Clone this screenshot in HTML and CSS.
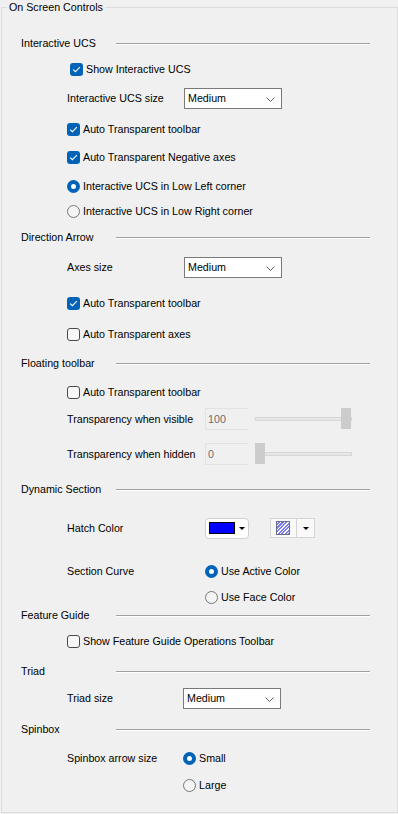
FILE: index.html
```html
<!DOCTYPE html>
<html lang="en">
<head>
    <meta charset="UTF-8">
    <meta name="viewport" content="width=device-width, initial-scale=1.0">
    <title>On Screen Controls</title>
    <link rel="stylesheet" href="styles.css">
</head>
<body>

<fieldset class="group">
    <legend>On Screen Controls</legend>

    <!-- Interactive UCS -->
    <div class="section-title gap-20"><span>Interactive UCS</span><i class="rule"></i></div>
    <div class="row gap-10 nudge">
        <span class="check on"><svg width="13" height="13" viewBox="0 0 13 13"><path d="M3.2 6.6 L5.4 8.7 L9.9 4.2" /></svg></span>Show Interactive UCS
    </div>
    <div class="row gap-13">
        <span class="field-label">Interactive UCS size</span>
        <div class="combo">Medium<svg class="chevron" width="9" height="5" viewBox="0 0 9 5"><path d="M0.5 0.5 L4.5 4.5 L8.5 0.5" /></svg></div>
    </div>
    <div class="row gap-15">
        <span class="check on"><svg width="13" height="13" viewBox="0 0 13 13"><path d="M3.2 6.6 L5.4 8.7 L9.9 4.2" /></svg></span>Auto Transparent toolbar
    </div>
    <div class="row gap-12">
        <span class="check on"><svg width="13" height="13" viewBox="0 0 13 13"><path d="M3.2 6.6 L5.4 8.7 L9.9 4.2" /></svg></span>Auto Transparent Negative axes
    </div>
    <div class="row gap-13">
        <span class="radio on"></span>Interactive UCS in Low Left corner
    </div>
    <div class="row gap-9">
        <span class="radio"></span>Interactive UCS in Low Right corner
    </div>

    <!-- Direction Arrow -->
    <div class="section-title gap-10"><span>Direction Arrow</span><i class="rule"></i></div>
    <div class="row gap-14">
        <span class="field-label">Axes size</span>
        <div class="combo">Medium<svg class="chevron" width="9" height="5" viewBox="0 0 9 5"><path d="M0.5 0.5 L4.5 4.5 L8.5 0.5" /></svg></div>
    </div>
    <div class="row gap-20">
        <span class="check on"><svg width="13" height="13" viewBox="0 0 13 13"><path d="M3.2 6.6 L5.4 8.7 L9.9 4.2" /></svg></span>Auto Transparent toolbar
    </div>
    <div class="row gap-15">
        <span class="check"></span>Auto Transparent axes
    </div>

    <!-- Floating toolbar -->
    <div class="section-title gap-13"><span>Floating toolbar</span><i class="rule"></i></div>
    <div class="row gap-13">
        <span class="check"></span>Auto Transparent toolbar
    </div>
    <div class="row gap-11">
        <span class="field-label wide">Transparency when visible</span>
        <div class="edit">100</div>
        <div class="slider"><i class="track"></i><i class="thumb at-max"></i></div>
    </div>
    <div class="row gap-19">
        <span class="field-label wide">Transparency when hidden</span>
        <div class="edit">0</div>
        <div class="slider"><i class="track"></i><i class="thumb at-min"></i></div>
    </div>

    <!-- Dynamic Section -->
    <div class="section-title gap-19"><span>Dynamic Section</span><i class="rule"></i></div>
    <div class="row gap-23">
        <span class="field-label wide">Hatch Color</span>
        <div class="color-btn"><span class="swatch"></span><span class="arrow"></span></div>
        <div class="hatch-btn"><span class="hatch-part"><span class="hatch"></span></span><span class="drop-part"><span class="arrow"></span></span></div>
    </div>
    <div class="row tall gap-27">
        <span class="field-label wide">Section Curve</span>
        <div class="options">
            <div class="option"><span class="radio on"></span>Use Active Color</div>
            <div class="option"><span class="radio"></span>Use Face Color</div>
        </div>
    </div>

    <!-- Feature Guide -->
    <div class="section-title gap-2"><span>Feature Guide</span><i class="rule"></i></div>
    <div class="row gap-10">
        <span class="check"></span>Show Feature Guide Operations Toolbar
    </div>

    <!-- Triad -->
    <div class="section-title gap-14"><span>Triad</span><i class="rule"></i></div>
    <div class="row gap-11">
        <span class="field-label narrow">Triad size</span>
        <div class="combo">Medium<svg class="chevron" width="9" height="5" viewBox="0 0 9 5"><path d="M0.5 0.5 L4.5 4.5 L8.5 0.5" /></svg></div>
    </div>

    <!-- Spinbox -->
    <div class="section-title gap-15"><span>Spinbox</span><i class="rule"></i></div>
    <div class="row tall gap-13">
        <span class="field-label narrow">Spinbox arrow size</span>
        <div class="options loose">
            <div class="option"><span class="radio on"></span>Small</div>
            <div class="option"><span class="radio"></span>Large</div>
        </div>
    </div>
</fieldset>

</body>
</html>
```

FILE: styles.css
```css
body {
    margin: 0;
    background-color: #f0f0f0;
    font-family: "Liberation Sans", Arial, sans-serif;
    font-size: 10.7px;
    color: #000;
}
.group {
    box-sizing: border-box;
    width: 397px;
    height: 813px;
    margin: 0 0 0 1px;
    padding: 0;
    border: 1px solid #dcdcdc;
}
.group legend {
    margin-left: 5px;
    padding: 0 2px;
    line-height: 15px;
}

/* section headings with etched rule */
.section-title {
    display: flex;
    align-items: center;
    height: 16px;
    padding-left: 19px;
}
.section-title span {
    width: 95px;
    flex: none;
}
.section-title .rule {
    flex: 1;
    margin: 2px 27px 0 0;
    border-top: 1px solid #a0a0a0;
    border-bottom: 1px solid #fff;
}

/* control rows */
.row {
    display: flex;
    align-items: center;
    height: 16px;
    padding-left: 65px;
}
.row.nudge {
    padding-left: 68px;
}
.row.tall {
    height: auto;
    align-items: flex-start;
}
.field-label {
    width: 117px;
    flex: none;
    line-height: 16px;
}
.field-label.wide {
    width: 138px;
}
.field-label.narrow {
    width: 116px;
}

.gap-2 { margin-top: 2px; }
.gap-9 { margin-top: 9px; }
.gap-10 { margin-top: 10px; }
.gap-11 { margin-top: 11px; }
.gap-12 { margin-top: 12px; }
.gap-13 { margin-top: 13px; }
.gap-14 { margin-top: 14px; }
.gap-15 { margin-top: 15px; }
.gap-19 { margin-top: 19px; }
.gap-20 { margin-top: 20px; }
.gap-23 { margin-top: 23px; }
.gap-27 { margin-top: 27px; }

/* checkbox */
.check {
    box-sizing: border-box;
    width: 13px;
    height: 13px;
    margin-right: 3px;
    border: 1px solid #4a4a4a;
    border-radius: 3px;
    background-color: #f7f7f7;
    flex: none;
}
.check.on {
    border: none;
    background-color: #0063b8;
}
.check svg {
    display: block;
}
.check path {
    fill: none;
    stroke: #fff;
    stroke-width: 1.1;
}

/* radio */
.radio {
    box-sizing: border-box;
    width: 13px;
    height: 13px;
    margin-right: 3px;
    border: 1px solid #777;
    border-radius: 50%;
    background-color: #f4f4f4;
    flex: none;
}
.radio.on {
    border: 4px solid #0063b8;
    background-color: #fff;
}
.options {
    display: flex;
    flex-direction: column;
    gap: 10px;
}
.options.loose {
    gap: 11px;
}
.option {
    display: flex;
    align-items: center;
    height: 16px;
}

/* combo box */
.combo {
    position: relative;
    box-sizing: border-box;
    width: 98px;
    height: 21px;
    padding-left: 3px;
    border: 1px solid #7a7a7a;
    background-color: #fff;
    line-height: 19px;
}
.combo .chevron {
    position: absolute;
    right: 6px;
    top: 8px;
}
.chevron path {
    fill: none;
    stroke: #606060;
}

/* disabled edit + slider */
.edit {
    box-sizing: border-box;
    width: 43px;
    height: 22px;
    padding-left: 2px;
    border: 1px solid #e2e2e2;
    border-right: none;
    color: #6d6d6d;
    line-height: 20px;
}
.slider {
    position: relative;
    width: 97px;
    height: 22px;
    margin-left: 7px;
}
.slider .track {
    position: absolute;
    left: 0;
    right: 0;
    top: 9px;
    height: 4px;
    box-sizing: border-box;
    border: 1px solid #d6d6d6;
    background-color: #e7e7e7;
}
.slider .thumb {
    position: absolute;
    top: 0;
    width: 10px;
    height: 21px;
    background-color: #cccccc;
}
.thumb.at-max { right: 1px; }
.thumb.at-min { left: 0; }

/* colour pickers */
.color-btn {
    display: flex;
    align-items: center;
    box-sizing: border-box;
    width: 44px;
    height: 21px;
    padding-left: 3px;
    border: 1px solid #d0d0d0;
    border-radius: 4px;
    background-color: #fff;
}
.swatch {
    box-sizing: border-box;
    width: 26px;
    height: 12px;
    border: 1px solid #000;
    background-color: #0000ff;
}
.arrow {
    width: 0;
    height: 0;
    border-top: 3px solid #000;
    border-left: 3px solid transparent;
    border-right: 3px solid transparent;
}
.color-btn .arrow {
    margin-left: 4px;
}
.hatch-btn {
    display: flex;
    box-sizing: border-box;
    height: 20px;
    margin-left: 21px;
    border: 1px solid #d4d4d4;
    background-color: #f9f9f9;
}
.hatch-part {
    display: flex;
    align-items: center;
    padding: 0 6px 0 5px;
    border-right: 1px solid #d4d4d4;
}
.hatch {
    box-sizing: border-box;
    width: 14px;
    height: 14px;
    border: 1px solid #6a6a8a;
    background: repeating-linear-gradient(135deg, #fff 0 1px, #7c7cf0 1px 2.5px);
}
.drop-part {
    display: flex;
    align-items: center;
    padding: 0 5px 0 6px;
}
```
